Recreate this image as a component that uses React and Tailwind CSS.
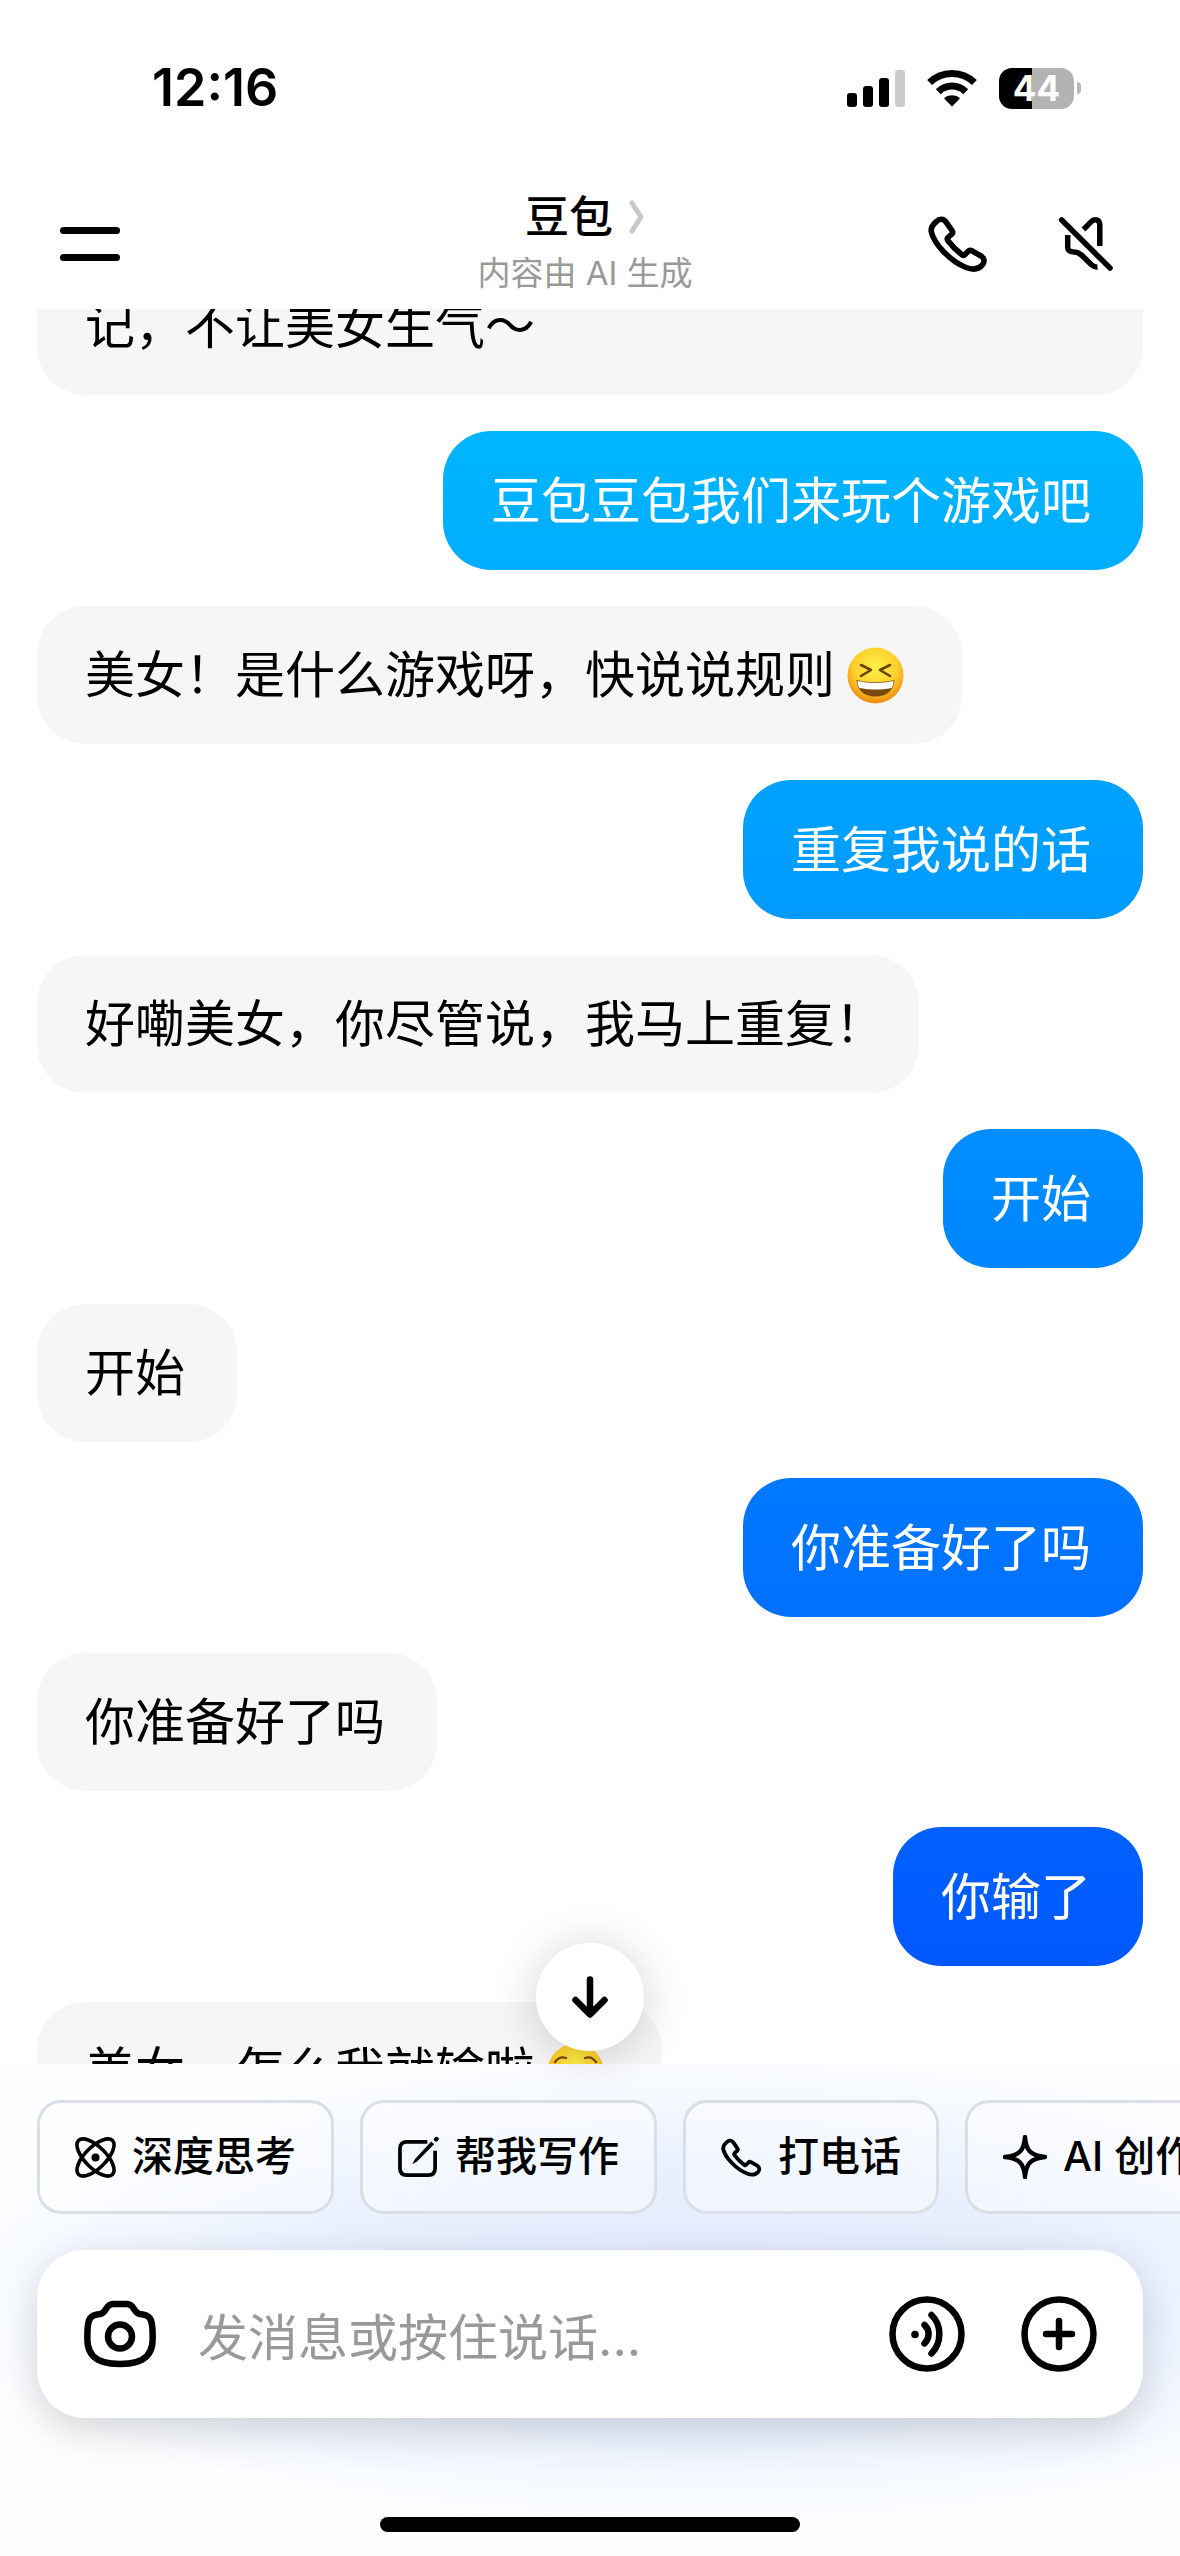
const messages = [
    { from: "bot", text: "记，不让美女生气～", wide: true },
    { from: "me", text: "豆包豆包我们来玩个游戏吧" },
    { from: "bot", text: "美女！是什么游戏呀，快说说规则", emoji: "laugh" },
    { from: "me", text: "重复我说的话" },
    { from: "bot", text: "好嘞美女，你尽管说，我马上重复", end: "！" },
    { from: "me", text: "开始" },
    { from: "bot", text: "开始" },
    { from: "me", text: "你准备好了吗" },
    { from: "bot", text: "你准备好了吗" },
    { from: "me", text: "你输了" },
    { from: "bot", text: "美女，怎么我就输啦", emoji: "blush" },
];

function SignalIcon() {
    return (
        <svg viewBox="0 0 58 38" className="w-[58px] h-[38px]">
            <rect x="0" y="24" width="10" height="14" rx="3" />
            <rect x="16" y="17" width="10" height="21" rx="3" />
            <rect x="32" y="9" width="10" height="29" rx="3" />
            <rect x="48" y="1" width="10" height="37" rx="3" fill="#cbcbcb" />
        </svg>
    );
}

function WifiIcon() {
    return (
        <svg viewBox="0 0 50 38" className="w-[50px] h-[38px]">
            <path d="M25 37.5 17.8 30.2C17.2 29.6 17.2 28.9 17.9 28.4 22 25.4 28 25.4 32.1 28.4 32.8 28.9 32.8 29.6 32.2 30.2Z" />
            <path d="M11.3 22.7A19.6 19.6 0 0 1 38.7 22.7" fill="none" stroke="black" strokeWidth="7" />
            <path d="M2.6 13.6A32 32 0 0 1 47.4 13.6" fill="none" stroke="black" strokeWidth="7" />
        </svg>
    );
}

function Battery() {
    return (
        <div className="flex items-center gap-[3px]">
            <div className="w-[75px] h-[41px] rounded-[13px] bg-linear-to-r from-black from-44% to-[#b3b3b3] to-44% flex items-center justify-center text-white text-[35px] leading-none font-bold">
                44
            </div>
            <div className="w-1 h-3 rounded-r-full bg-[#b8b8b8]" />
        </div>
    );
}

function PhoneIcon({ className }) {
    return (
        <svg viewBox="0 0 60 60" fill="none" stroke="currentColor" strokeWidth="5.6" strokeLinejoin="round" className={className}>
            <path d="M8.5 7.5C11.5 4.5 15.5 4.5 18 8L24 16.5C25 18 25 19 23.8 20.2L20 23.5C19 24.5 19 25.5 20 26.8C24 32 29 37 34 40.8C35.2 41.7 36.2 41.5 37 40.5L40 37.5C41.2 36.2 42.5 36 44 36.8L53 42C56.8 44.3 56.8 48 54.2 51.2C50.5 55.5 44.5 56 38 53.5C22 47 6 30 3.2 17.5C2.8 13.5 5.5 10 8.5 7.5Z" />
        </svg>
    );
}

function MuteIcon() {
    return (
        <svg viewBox="0 0 56 58" fill="none" stroke="currentColor" strokeWidth="5.5" strokeLinejoin="round" className="w-14 h-[58px]">
            <path d="M3.7 5 52 53" strokeLinecap="round" />
            <path d="M9.7 20V32C9.7 35.5 11 36.5 14.5 36.8C19 37 21.5 38 24 40.5L33.5 49.8C35.5 51.6 37 52.2 39.5 52" />
            <path d="M25.5 14.5 32.5 7.3C36.5 3 41.7 4.5 41.8 10V31" />
        </svg>
    );
}

function AtomIcon() {
    return (
        <svg viewBox="0 0 41 41" fill="none" stroke="currentColor" strokeWidth="3.6" className="w-[41px] h-[41px]">
            <ellipse cx="20.5" cy="20.5" rx="24" ry="10.5" transform="rotate(45 20.5 20.5)" />
            <ellipse cx="20.5" cy="20.5" rx="24" ry="10.5" transform="rotate(-45 20.5 20.5)" />
            <circle cx="20.5" cy="20.5" r="4" fill="currentColor" stroke="none" />
        </svg>
    );
}

function WriteIcon() {
    return (
        <svg viewBox="0 0 42 42" fill="none" stroke="currentColor" strokeWidth="3.8" className="w-[41px] h-[41px]">
            <path d="M30 5H9C4.5 5 2 7.5 2 12V32C2 36.5 4.5 39 9 39H31C35.5 39 38 36.5 38 32V14" />
            <path d="M14.5 28 17.5 22.5 34 4.5 37 7.5 19.5 25Z" fill="currentColor" stroke="none" />
            <path d="M39 2.5 39.5 2" strokeWidth="4.5" strokeLinecap="round" />
        </svg>
    );
}

function SparkIcon() {
    return (
        <svg viewBox="0 0 44 44" fill="none" stroke="currentColor" strokeWidth="4.4" strokeLinejoin="round" className="w-11 h-11">
            <path d="M22 2C23 15 27 20.5 42 22C27 23.5 23 29 22 42C21 29 17 23.5 2 22C17 20.5 21 15 22 2Z" />
        </svg>
    );
}

function CameraIcon() {
    return (
        <svg viewBox="0 0 72 68" fill="none" stroke="currentColor" strokeWidth="6.5" className="w-[72px] h-[68px]">
            <path d="M29 4H43C51 4 49 13 56 14C66 15 68 19 68.5 30C69 42 69 49 63 56C57 62 47 64 36 64C25 64 15 62 9 56C3 49 3 42 3.5 30C4 19 6 15 16 14C23 13 21 4 29 4Z" />
            <circle cx="36" cy="36.5" r="12" />
        </svg>
    );
}

function VoiceIcon() {
    return (
        <svg viewBox="0 0 76 76" fill="none" stroke="currentColor" strokeWidth="6.5" strokeLinecap="round" className="w-[76px] h-[76px]">
            <circle cx="38" cy="38" r="34.5" />
            <circle cx="26" cy="38.5" r="3.8" fill="currentColor" stroke="none" />
            <path d="M35.5 29C41 34 41 42 35.5 47.5" />
            <path d="M42.5 19C53 29 53 47 42.5 57.5" />
        </svg>
    );
}

function PlusIcon() {
    return (
        <svg viewBox="0 0 76 76" fill="none" stroke="currentColor" strokeWidth="6.5" strokeLinecap="round" className="w-[76px] h-[76px]">
            <circle cx="38" cy="38" r="34.5" />
            <path d="M38 25V51M25 38H51" />
        </svg>
    );
}

function Emoji({ kind }) {
    return (
        <svg viewBox="0 0 57 57" className="w-[57px] h-[57px] ml-3 mr-1.5 shrink-0">
            <defs>
                <radialGradient id="face" cx="0.5" cy="0.35" r="0.65">
                    <stop offset="0" stopColor="#fff04a" />
                    <stop offset="0.6" stopColor="#fdd02c" />
                    <stop offset="1" stopColor="#ee8a12" />
                </radialGradient>
            </defs>
            <circle cx="28.5" cy="28.5" r="28" fill="url(#face)" />
            {kind === "laugh" ? (
                <>
                    <path d="M14 18 24 23 14 29M43 18 33 23 43 29" fill="none" stroke="#6b4208" strokeWidth="2.6" strokeLinecap="round" strokeLinejoin="round" />
                    <path d="M9.5 33C22 36 35 36 47.5 33C47 43 40 49.5 28.5 49.5C17 49.5 10 43 9.5 33Z" fill="#7a4a0c" />
                    <path d="M10.5 34C22 36.5 35 36.5 46.5 34C46.5 37 46 39 44.5 41C34 43 23 43 12.5 41C11 39 10.5 37 10.5 34Z" fill="#fff" />
                </>
            ) : (
                <path d="M8 19C11 15 15 13.5 19 15M38 15C42 13.5 46 15 49 19" fill="none" stroke="#7a4a0c" strokeWidth="2.4" strokeLinecap="round" />
            )}
        </svg>
    );
}

function Bubble({ message }) {
    const mine = message.from === "me";

    return (
        <div
            className={`pl-12 pr-[52px] rounded-[48px] shrink-0 flex items-center text-[50px] leading-[70px] whitespace-nowrap ${
                mine
                    ? "h-[139px] self-end text-white bg-fixed bg-linear-to-b from-[#00b5ff] from-17% to-[#0057ff] to-77%"
                    : "h-[138px] self-start text-black bg-[#f6f6f6]"
            } ${message.wide ? "w-full" : ""}`}
        >
            <p>
                {message.text}
                {message.end && <span className="inline-block w-8">{message.end}</span>}
            </p>
            {message.emoji && <Emoji kind={message.emoji} />}
        </div>
    );
}

function Chip({ icon, children }) {
    return (
        <button className="h-[114px] px-[35px] shrink-0 flex items-center gap-4 rounded-3xl border-3 border-[#dadee6] bg-white/40 text-[41px] font-medium whitespace-nowrap">
            {icon}
            {children}
        </button>
    );
}

function App() {
    return (
        <div className="h-screen flex flex-col overflow-hidden bg-white text-black font-['Inter','Noto_Sans_CJK_SC',sans-serif]">

            {/* Status bar */}
            <div className="h-44 pl-[152px] pr-[99px] shrink-0 flex items-center justify-between">
                <span className="text-[52px] leading-none font-semibold">12:16</span>
                <div className="flex items-center gap-[22px]">
                    <SignalIcon />
                    <WifiIcon />
                    <Battery />
                </div>
            </div>

            {/* Header */}
            <header className="h-[133px] pt-0.5 pl-[60px] pr-[66px] shrink-0 grid grid-cols-[1fr_auto_1fr] items-center">
                <button aria-label="菜单" className="w-[60px] flex flex-col gap-5">
                    <span className="h-[7px] rounded-full bg-black" />
                    <span className="h-[7px] rounded-full bg-black" />
                </button>
                <div className="pr-1 flex flex-col items-center">
                    <h1 className="flex items-center gap-4 text-[44px] leading-[58px] font-medium">
                        豆包
                        <svg viewBox="0 0 16 34" fill="none" stroke="#c8c8c8" strokeWidth="5" strokeLinecap="round" strokeLinejoin="round" className="w-4 h-[34px]">
                            <path d="M3 3 12 17 3 31" />
                        </svg>
                    </h1>
                    <p className="text-[33px] leading-[54px] text-[#999]">内容由 AI 生成</p>
                </div>
                <div className="flex items-center justify-end gap-[70px]">
                    <button aria-label="打电话">
                        <PhoneIcon className="w-[60px] h-[60px]" />
                    </button>
                    <button aria-label="静音">
                        <MuteIcon />
                    </button>
                </div>
            </header>

            {/* Messages */}
            <main className="flex-1 min-h-0 overflow-hidden px-[37px]">
                <div className="-mt-[52px] flex flex-col gap-9">
                    {messages.map((message, i) => (
                        <Bubble key={i} message={message} />
                    ))}
                </div>
            </main>

            {/* Composer */}
            <footer className="relative shrink-0 pt-9 pb-6 bg-[radial-gradient(66%_48%_at_60%_46%,#e2e9fd_0%,#e8f0ff_50%,#f4f8ff_80%,#fcfeff_100%)]">
                <button
                    aria-label="回到底部"
                    className="absolute -top-[121px] left-1/2 -translate-x-1/2 w-[108px] h-[108px] rounded-full bg-white flex items-center justify-center shadow-[0_4px_48px_rgba(0,0,0,0.18)]"
                >
                    <svg viewBox="0 0 36 42" fill="none" stroke="currentColor" strokeWidth="6.5" strokeLinecap="round" strokeLinejoin="round" className="w-9 h-[42px]">
                        <path d="M18 3.5V38M3.5 24 18 38.5 32.5 24" />
                    </svg>
                </button>

                <div className="flex gap-[26px] pl-[37px] overflow-hidden">
                    <Chip icon={<AtomIcon />}>深度思考</Chip>
                    <Chip icon={<WriteIcon />}>帮我写作</Chip>
                    <Chip icon={<PhoneIcon className="w-[41px] h-[41px]" />}>打电话</Chip>
                    <Chip icon={<SparkIcon />}>AI 创作</Chip>
                </div>

                <div className="mx-[37px] mt-9 h-[168px] pl-[47px] pr-[46px] flex items-center rounded-[48px] bg-white shadow-[0_12px_40px_rgba(0,0,0,0.16)]">
                    <button aria-label="拍照">
                        <CameraIcon />
                    </button>
                    <input
                        type="text"
                        aria-label="发消息"
                        placeholder="发消息或按住说话..."
                        className="flex-1 min-w-0 mx-[42px] pt-2 text-[50px] leading-[70px] outline-none placeholder:text-[#999]"
                    />
                    <div className="flex gap-14">
                        <button aria-label="语音">
                            <VoiceIcon />
                        </button>
                        <button aria-label="更多">
                            <PlusIcon />
                        </button>
                    </div>
                </div>

                <div className="mt-[99px] mx-auto w-[420px] h-[15px] rounded-full bg-black" />
            </footer>
        </div>
    );
}

export default App;
